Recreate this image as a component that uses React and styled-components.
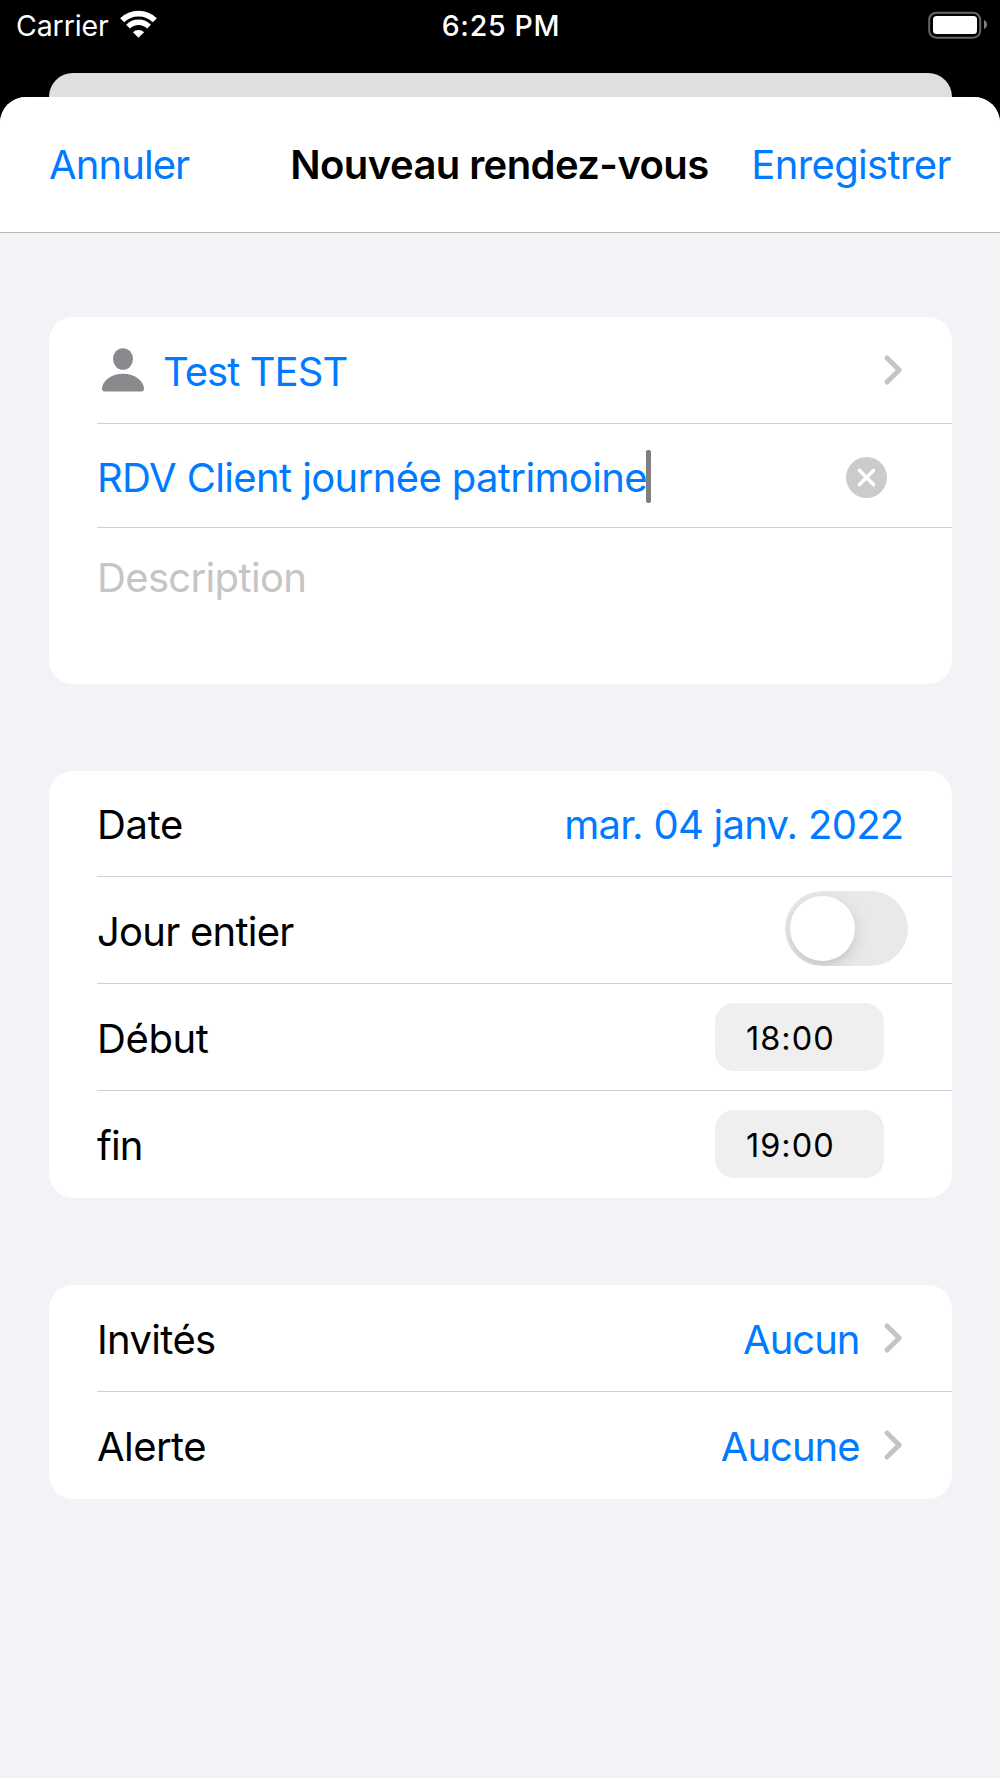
import React, { useState } from "react"
import styled, { createGlobalStyle, ThemeProvider } from "styled-components"

const theme = {
    blue: "#007aff",
    black: "#000000",
    white: "#ffffff",
    page: "#f2f2f7",
    line: "#d0d0d2",
    navLine: "#b5b4b9",
    grey: "#8a898e",
    chevron: "#c4c4c6",
    placeholder: "#c5c5c6",
    pill: "#efefef",
}

const GlobalStyle = createGlobalStyle`
    * {
        box-sizing: border-box;
    }

    body {
        margin: 0;
        background: ${theme.page};
        font-family: Inter, "Liberation Sans", sans-serif;
    }
`

const Screen = styled.div`
    width: 1000px;
    height: 1778px;
    overflow: hidden;
    display: flex;
    flex-direction: column;
    background: ${({ theme }) => theme.black};
`

const Text = styled.span`
    font-size: ${({ $size }) => $size || 40}px;
    font-weight: ${({ $weight }) => $weight || 400};
    line-height: 48px;
    letter-spacing: ${({ $track }) => $track || 0}px;
    color: ${({ theme, $color }) => theme[$color || "black"]};
    white-space: nowrap;
`

const Label = styled(Text)`
    padding-top: 3px;
`

const StatusBar = styled.header`
    flex: none;
    height: 73px;
    padding: 2px 14px 0 16px;
    display: grid;
    grid-template-columns: 1fr auto 1fr;
    align-items: start;
`

const Carrier = styled.div`
    display: flex;
    gap: 11px;

    svg {
        margin-top: 8px;
    }
`

const Battery = styled.svg`
    justify-self: end;
    margin-top: 8px;
    margin-right: -1px;
`

const BackCard = styled.div`
    flex: none;
    height: 48px;
    margin: 0 48.5px -24px;
    border-radius: 24px 24px 0 0;
    background: #dfdfdf;
`

const Sheet = styled.main`
    flex: 1;
    position: relative;
    border-radius: 26px 26px 0 0;
    overflow: hidden;
    background: ${({ theme }) => theme.page};
`

const NavBar = styled.nav`
    height: 136px;
    padding: 0 49px;
    display: flex;
    align-items: center;
    background: ${({ theme }) => theme.white};
    border-bottom: 1px solid ${({ theme }) => theme.navLine};
`

const NavTitle = styled(Text)`
    margin-left: 101px;
    margin-right: auto;
`

const Form = styled.div`
    padding: 84px 48.5px 0;
    display: flex;
    flex-direction: column;
    gap: 87px;
`

const Card = styled.section`
    padding-left: 48.5px;
    border-radius: 24px;
    overflow: hidden;
    background: ${({ theme }) => theme.white};
`

const Row = styled.div`
    height: ${({ $height }) => $height || 107}px;
    padding-top: ${({ $top }) => $top || 0}px;
    padding-right: ${({ $right }) => $right || 49}px;
    display: flex;
    align-items: ${({ $align }) => $align || "center"};
    border-bottom: 1px solid ${({ theme }) => theme.line};

    &:last-child {
        border-bottom-color: transparent;
    }
`

const Value = styled.div`
    margin-left: auto;
    display: flex;
    align-items: center;
    gap: 24px;
`

const Person = styled.svg`
    margin: 0 19px 1px 5px;
`

const Caret = styled.span`
    width: 5px;
    height: 53px;
    margin-left: -1px;
    margin-bottom: 2px;
    border-radius: 2px;
    background: #7f7f7f;
`

const Toggle = styled.button`
    width: 123px;
    height: 75px;
    padding: 5px;
    margin-bottom: 3px;
    border: none;
    border-radius: 38px;
    display: flex;
    justify-content: ${({ $on }) => $on ? "flex-end" : "flex-start"};
    background: ${({ $on }) => $on ? "#34c759" : "#e9e9eb"};
    overflow: hidden;
`

const Knob = styled.span`
    width: 65px;
    height: 65px;
    border-radius: 50%;
    background: ${({ theme }) => theme.white};
    box-shadow: 0 6px 18px rgba(0, 0, 0, .13), 0 5px 3px rgba(0, 0, 0, .03);
`

const TimePill = styled.div`
    width: 169px;
    height: 68px;
    padding-left: 31px;
    border-radius: 19px;
    display: flex;
    align-items: center;
    background: ${({ theme }) => theme.pill};
`

const Chevron = () => (
    <svg width="19" height="30" viewBox="0 0 19 30" fill="none">
        <path d="M3 2.9 L15.2 15 L3 27.1" stroke={theme.chevron} strokeWidth="4.9" strokeLinecap="round" strokeLinejoin="round" />
    </svg>
)

const WifiIcon = () => (
    <svg width="37" height="28" viewBox="0 0 37 28" fill="none">
        <path d="M2.2 10.3 A23.2 23.2 0 0 1 34.8 10.3" stroke="#fff" strokeWidth="5.8" />
        <path d="M8 16.7 A14.7 14.7 0 0 1 29 16.7" stroke="#fff" strokeWidth="5.4" />
        <path d="M18.5 27.8 L12.9 22.2 A8 8 0 0 1 24.1 22.2 Z" fill="#fff" />
    </svg>
)

const App = () => {

    const [ allDay, setAllDay ] = useState(false)

    const times = [
        { label: "Début", value: "18:00", track: -0.4 },
        { label: "fin", value: "19:00", track: -0.9 }
    ]
    const links = [
        { label: "Invités", value: "Aucun", track: -0.65 },
        { label: "Alerte", value: "Aucune", track: -0.55 }
    ]

    return (
        <ThemeProvider theme={theme}>
            <GlobalStyle />
            <Screen>
                <StatusBar>
                    <Carrier>
                        <Text $size={28.5} $track={-0.1} $color="white">Carrier</Text>
                        <WifiIcon />
                    </Carrier>
                    <Text $size={28.5} $weight={500} $track={0.7} $color="white">6:25 PM</Text>
                    <Battery width="60" height="29" viewBox="0 0 60 29">
                        <rect x="2.2" y="2.7" width="51" height="25" rx="7" fill="none" stroke="#666" strokeWidth="2" />
                        <rect x="6" y="6" width="44" height="18" rx="3.5" fill="#fff" />
                        <path d="M57 10 Q60 11.5 60 14.5 Q60 17.5 57 19 Z" fill="#808080" />
                    </Battery>
                </StatusBar>
                <BackCard />
                <Sheet>
                    <NavBar>
                        <Text $track={-0.9} $color="blue">Annuler</Text>
                        <NavTitle $weight={600} $track={-0.58}>Nouveau rendez-vous</NavTitle>
                        <Text $track={-0.62} $color="blue">Enregistrer</Text>
                    </NavBar>
                    <Form>
                        <Card>
                            <Row>
                                <Person width="42" height="44" viewBox="0 0 42 44" fill={theme.grey}>
                                    <ellipse cx="21" cy="11" rx="10" ry="10.8" />
                                    <path d="M3 43.5 Q0 43.5 0 40.5 C0 33.5 9 25.7 21 25.7 C33 25.7 42 33.5 42 40.5 Q42 43.5 39 43.5 Z" />
                                </Person>
                                <Label $track={-0.95} $color="blue">Test TEST</Label>
                                <Value><Chevron /></Value>
                            </Row>
                            <Row $height={104} $top={4} $right={65}>
                                <Text $track={-0.62} $color="blue">RDV Client journée patrimoine</Text>
                                <Caret />
                                <Value>
                                    <svg width="41" height="41" viewBox="0 0 41 41">
                                        <circle cx="20.5" cy="20.5" r="20.5" fill="#cbcbcb" />
                                        <path d="M13.5 13.5 L27.5 27.5 M27.5 13.5 L13.5 27.5" stroke="#fff" strokeWidth="3.6" strokeLinecap="round" />
                                    </svg>
                                </Value>
                            </Row>
                            <Row $height={156} $align="flex-start" $top={26}>
                                <Text $track={-0.65} $color="placeholder">Description</Text>
                            </Row>
                        </Card>
                        <Card>
                            <Row $height={106} $right={48}>
                                <Label $track={-0.35}>Date</Label>
                                <Value><Label $track={-0.72} $color="blue">mar. 04 janv. 2022</Label></Value>
                            </Row>
                            <Row $right={44}>
                                <Label $track={-0.75}>Jour entier</Label>
                                <Value>
                                    <Toggle $on={allDay} onClick={() => setAllDay(prev => !prev)}>
                                        <Knob />
                                    </Toggle>
                                </Value>
                            </Row>
                            {times.map((time, index) => (
                                <Row key={index} $right={67.5}>
                                    <Label $track={time.track}>{time.label}</Label>
                                    <Value>
                                        <TimePill><Label $size={32.5} $track={1}>{time.value}</Label></TimePill>
                                    </Value>
                                </Row>
                            ))}
                        </Card>
                        <Card>
                            {links.map((link, index) => (
                                <Row key={index}>
                                    <Label $track={link.track}>{link.label}</Label>
                                    <Value>
                                        <Label $track={-1} $color="blue">{link.value}</Label>
                                        <Chevron />
                                    </Value>
                                </Row>
                            ))}
                        </Card>
                    </Form>
                </Sheet>
            </Screen>
        </ThemeProvider>
    )
}

export default App
